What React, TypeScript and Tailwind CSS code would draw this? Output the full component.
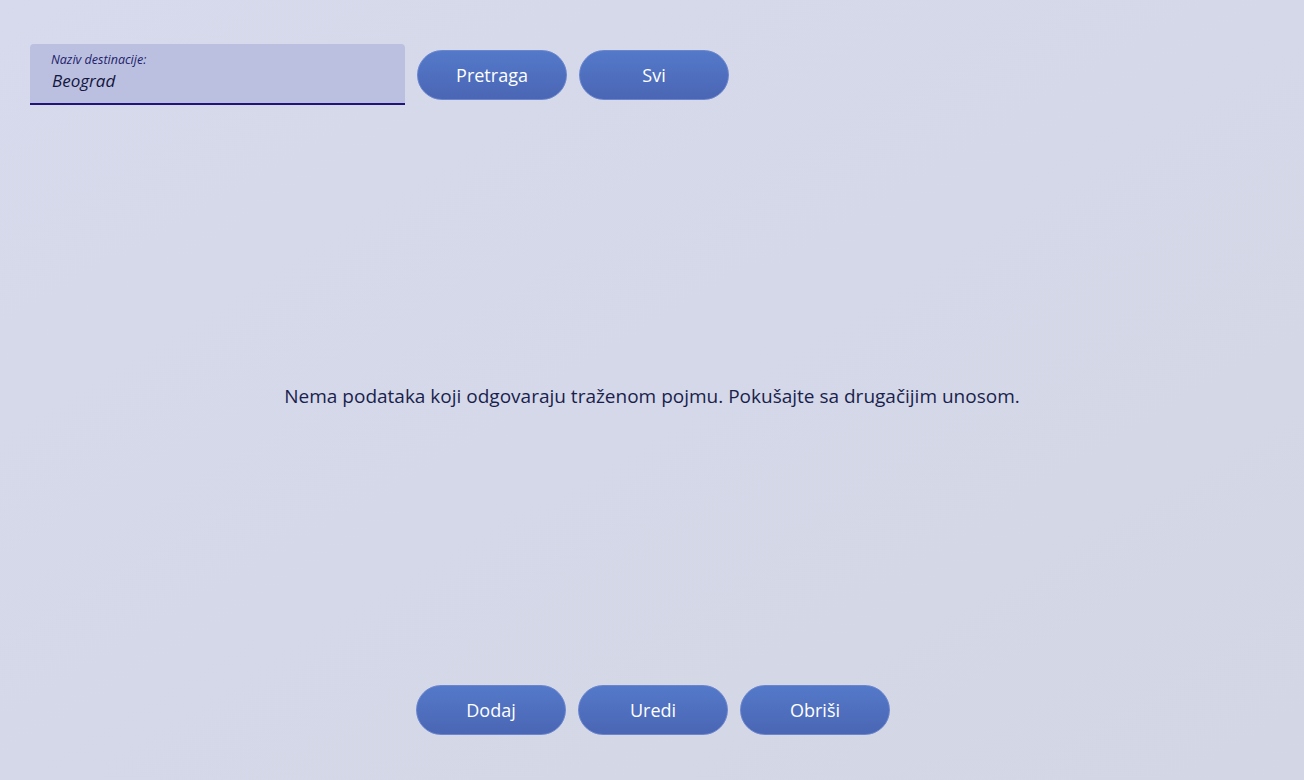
import React from "react";

const font = { fontFamily: '"Segoe UI", "Open Sans", "Noto Sans", sans-serif' };

function PillButton({ label }: { label: string }) {
  return (
    <button
      type="button"
      className="h-[50px] w-[150px] rounded-full border border-[#6b86cf] bg-gradient-to-b from-[#5479c9] to-[#4a66b4] text-[18px] text-white"
    >
      {label}
    </button>
  );
}

export default function App() {
  return (
    <div
      style={font}
      className="flex h-[780px] w-full flex-col bg-gradient-to-br from-[#d6daec] to-[#d3d6e4]"
    >
      {/* search row */}
      <div className="flex items-start gap-[12px] pl-[30px] pt-[44px]">
        <div className="flex h-[61px] w-[375px] flex-col rounded-t-[4px] border-b-2 border-[#22157a] bg-[#bcc0e0] pl-[21px] pt-[8px]">
          <span className="text-[12.5px] italic leading-[16px] text-[#1d1d6b]">Naziv destinacije:</span>
          <span className="pl-px text-[17px] italic leading-[26px] text-[#13163f]">Beograd</span>
        </div>
        <div className="mt-[6px] flex gap-[12px]">
          <PillButton label="Pretraga" />
          <PillButton label="Svi" />
        </div>
      </div>

      {/* empty state */}
      <div className="flex flex-1 items-center justify-center pt-[2px]">
        <p className="text-[19px] text-[#1a1f4d]">
          Nema podataka koji odgovaraju traženom pojmu. Pokušajte sa drugačijim unosom.
        </p>
      </div>

      {/* actions */}
      <div className="flex justify-center gap-[12px] pb-[45px] pl-[2px]">
        <PillButton label="Dodaj" />
        <PillButton label="Uredi" />
        <PillButton label="Obriši" />
      </div>
    </div>
  );
}
